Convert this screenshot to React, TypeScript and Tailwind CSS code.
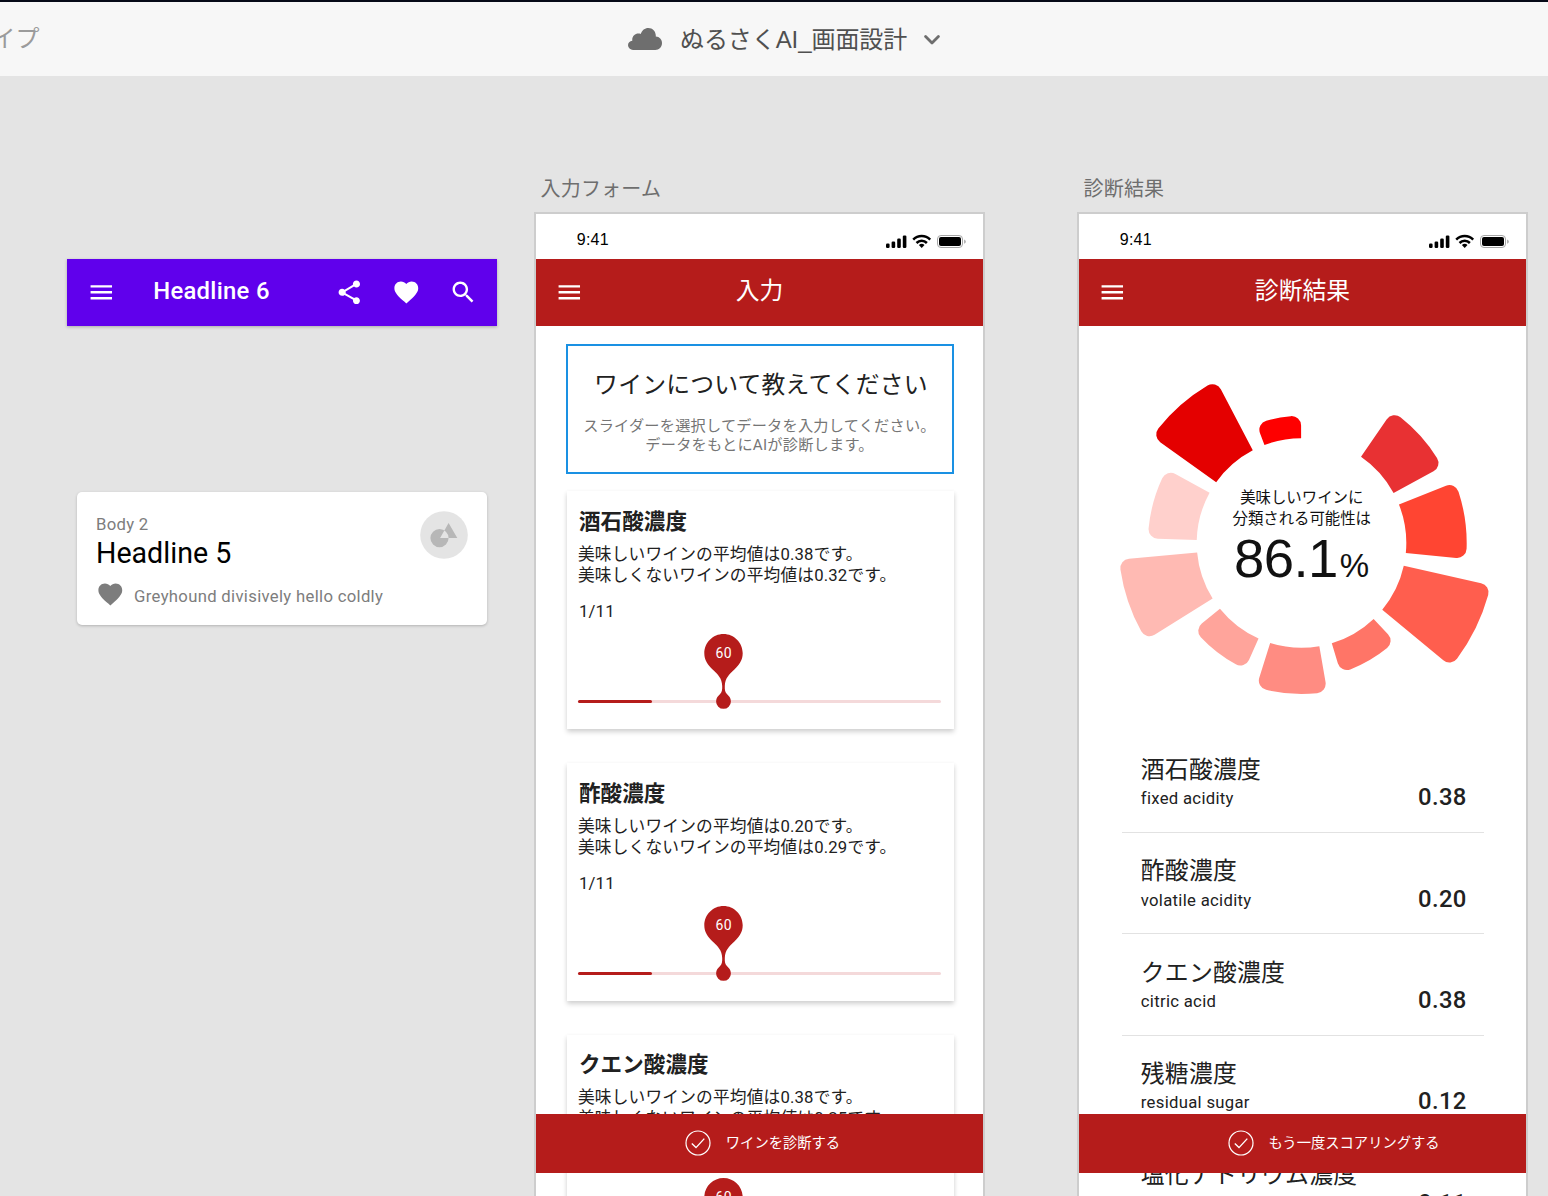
import type { ReactNode } from "react";

type Sector = { from: number; to: number; radius: number; color: string };

const sectors: Sector[] = [
  { from: -54.5, to: -27.7, radius: 183.3, color: "#e40000" },
  { from: -20.7, to: -0.2, radius: 127.3, color: "#fe0000" },
  { from: 34.6, to: 61.5, radius: 160, color: "#e83133" },
  { from: 68.4, to: 95.5, radius: 165.2, color: "#ff4532" },
  { from: 102.6, to: 129.6, radius: 193.8, color: "#ff5e4e" },
  { from: 136.5, to: 163.2, radius: 135.5, color: "#ff7567" },
  { from: 170.2, to: 197.4, radius: 151, color: "#ff8c82" },
  { from: 204.2, to: 231.1, radius: 138, color: "#ffa49b" },
  { from: 238, to: 264.8, radius: 183, color: "#ffbab3" },
  { from: 271.7, to: 298.7, radius: 153.6, color: "#ffd0cc" },
];

const INNER = 104.8;
const CORNER = 9.5;

// Ring sector whose two outer corners are rounded; angles run clockwise from 12 o'clock.
function sectorPath({ from, to, radius }: Sector) {
  const a = (from * Math.PI) / 180;
  const b = (to * Math.PI) / 180;
  const pt = (r: number, t: number) =>
    `${(r * Math.sin(t)).toFixed(2)} ${(-r * Math.cos(t)).toFixed(2)}`;
  const inset = Math.asin(CORNER / (radius - CORNER));
  const edge = Math.sqrt((radius - CORNER) ** 2 - CORNER ** 2);
  return [
    `M${pt(INNER, a)}`,
    `L${pt(edge, a)}`,
    `A${CORNER} ${CORNER} 0 0 1 ${pt(radius, a + inset)}`,
    `A${radius} ${radius} 0 0 1 ${pt(radius, b - inset)}`,
    `A${CORNER} ${CORNER} 0 0 1 ${pt(edge, b)}`,
    `L${pt(INNER, b)}`,
    `A${INNER} ${INNER} 0 0 0 ${pt(INNER, a)}Z`,
  ].join("");
}

function Icon({ d, className }: { d: string; className?: string }) {
  return (
    <svg viewBox="0 0 24 24" className={`size-[28.6px] shrink-0 fill-current ${className ?? ""}`}>
      <path d={d} />
    </svg>
  );
}

const MENU = "M3 18h18v-2H3v2zm0-5h18v-2H3v2zm0-7v2h18V6H3z";
const SHARE =
  "M18 16.08c-.76 0-1.44.3-1.96.77L8.91 12.7c.05-.23.09-.46.09-.7s-.04-.47-.09-.7l7.05-4.11c.54.5 1.25.81 2.04.81 1.66 0 3-1.34 3-3s-1.34-3-3-3-3 1.34-3 3c0 .24.04.47.09.7L8.04 9.81C7.5 9.31 6.79 9 6 9c-1.66 0-3 1.34-3 3s1.34 3 3 3c.79 0 1.5-.31 2.04-.81l7.12 4.16c-.05.21-.08.43-.08.65 0 1.61 1.31 2.92 2.92 2.92s2.92-1.31 2.92-2.92-1.31-2.92-2.92-2.92z";
const HEART =
  "M12 21.35l-1.45-1.32C5.4 15.36 2 12.28 2 8.5 2 5.42 4.42 3 7.5 3c1.74 0 3.41.81 4.5 2.09C13.09 3.81 14.76 3 16.5 3 19.58 3 22 5.42 22 8.5c0 3.78-3.4 6.86-8.55 11.54L12 21.35z";
const SEARCH =
  "M15.5 14h-.79l-.28-.27C15.41 12.59 16 11.11 16 9.5 16 5.91 13.09 3 9.5 3S3 5.91 3 9.5 5.91 16 9.5 16c1.61 0 3.09-.59 4.23-1.57l.27.28v.79l5 4.99L20.49 19l-4.99-5zm-6 0C7.01 14 5 11.99 5 9.5S7.01 5 9.5 5 14 7.01 14 9.5 11.99 14 9.5 14z";

function StatusBar() {
  return (
    <div className="flex h-[45.3px] items-start justify-between pt-[16px] pr-[17.5px] pl-[40.8px]">
      <span className="font-['Liberation_Sans',sans-serif] text-[16px] leading-[20px] tracking-[0.2px] text-black">
        9:41
      </span>
      <svg viewBox="0 0 82 16" className="mt-[4px] h-[16px] w-[82px]">
        <g>
          <rect x="2" y="9.5" width="3.6" height="4.5" rx="1.2" />
          <rect x="7.6" y="7.500" width="3.6" height="6.5" rx="1.2" />
          <rect x="13.2" y="4.500" width="3.6" height="9.5" rx="1.2" />
          <rect x="18.800" y="1.500" width="3.6" height="12.5" rx="1.2" />
        </g>
        <g fill="none" stroke="#000" strokeWidth="2.5">
          <path d="M29.2 5.6a12 12 0 0 1 17 0" />
          <path d="M32.5 9a7.3 7.3 0 0 1 10.4 0" />
        </g>
        <path d="M37.7 14l-2.8-2.9a4 4 0 0 1 5.6 0z" />
        <rect x="53.5" y="1.5" width="25" height="12" rx="3.5" fill="none" stroke="#a6a6a6" />
        <rect x="55" y="3" width="22" height="9" rx="2" />
        <path d="M80 5.5c1.4.6 1.9 1.2 1.9 2.1s-.5 1.6-1.9 2.2z" fill="#b3b3b3" />
      </svg>
    </div>
  );
}

function AppBar({ title }: { title: string }) {
  return (
    <div className="grid h-[66.7px] grid-cols-[66px_1fr_66px] bg-[#b51c1b] text-white">
      <div className="flex items-center pl-[19px]">
        <Icon d={MENU} />
      </div>
      <h2 className="pt-[16.7px] text-center text-[23.84px] leading-[30px]">{title}</h2>
    </div>
  );
}

function Artboard({
  name,
  title,
  action,
  actionInset,
  className,
  children,
}: {
  name: string;
  title: string;
  action: string;
  actionInset: string;
  className: string;
  children: ReactNode;
}) {
  return (
    <section className={`absolute top-[97px] w-[451px] ${className}`}>
      <h3 className="h-[39px] pt-px pl-[6.5px] font-['Liberation_Sans','Noto_Sans_CJK_JP',sans-serif] text-[20px] leading-[31px] tracking-[0.2px] text-[#6e6e6e]">
        {name}
      </h3>
      <div className="relative h-[1000px] overflow-hidden border-2 border-[#cdcdcd] bg-white">
        <StatusBar />
        <AppBar title={title} />
        {children}
        <div
          className={`absolute inset-x-0 top-[899.7px] flex h-[59.6px] items-center bg-[#b51c1b] text-white ${actionInset}`}
        >
          <svg
            viewBox="0 0 26 26"
            className="size-[26px] fill-none stroke-white"
            strokeWidth="1.2"
          >
            <circle cx="13" cy="13" r="12" />
            <path d="M6.8 13.6l4.2 4 8.3-9" strokeWidth="1.4" />
          </svg>
          <span className="ml-[14.5px] text-[14.3px] leading-[20px]">{action}</span>
        </div>
      </div>
    </section>
  );
}

function Slider() {
  return (
    <div className="relative mt-[12.25px] flex h-[75px] w-[363px] flex-col justify-end pb-[6.3px]">
      <div className="h-[2.6px] rounded-full bg-[#f4d9da]">
        <div className="h-full w-[74px] rounded-full bg-[#b51c1b]" />
      </div>
      <div className="absolute top-0 left-[126.3px] h-[75px] w-[39px]">
        <svg viewBox="0 0 39 75" className="h-full w-full fill-[#b51c1b]">
          <path d="M19.5 0C8.9 0 .3 8.6 .3 19.3c0 7.2 3.7 11.7 8.3 16.2C13.8 40.5 18 44 18.2 52c.1 3.9-.1 5.8-1.9 7.7-2.2 2.3-4.2 4.1-4.2 7.7a7.4 7.4 0 0 0 14.8 0c0-3.6-2-5.4-4.2-7.7-1.8-1.9-2-3.8-1.9-7.7.2-8 4.4-11.5 9.6-16.5 4.6-4.5 8.3-9 8.3-16.2C38.7 8.6 30.1 0 19.5 0z" />
        </svg>
        <span className="absolute inset-x-0 top-[9px] text-center text-[14px] leading-[20px] tracking-[0.4px] text-white">
          60
        </span>
      </div>
    </div>
  );
}

function InputCard({ title, good, bad }: { title: string; good: string; bad: string }) {
  return (
    <article className="mb-[33.85px] h-[238px] bg-white pt-[17.75px] pl-[11px] text-[16.69px] tracking-[0.18px] text-[#212121] shadow-[0_3px_5px_rgba(0,0,0,0.17),0_1px_5px_rgba(0,0,0,0.04)]">
      <h4 className="h-[26px] pl-px text-[21.5px] leading-[26px] font-bold tracking-[0.1px]">
        {title}
      </h4>
      <div className="mt-[9px] leading-[21px]">
        <p>美味しいワインの平均値は{good}です。</p>
        <p>美味しくないワインの平均値は{bad}です。</p>
      </div>
      <p className="mt-[16px] pl-px leading-[20px]">1/11</p>
      <Slider />
    </article>
  );
}

function ResultRow({ name, en, value }: { name: string; en: string; value: string }) {
  return (
    <li className="flex h-[101.4px] items-start justify-between border-b border-[#e2e2e2] pt-[23.5px] pr-[17.2px] pl-[18.8px] text-[#212121]">
      <div>
        <p className="text-[23.84px] leading-[30px] tracking-[0.22px]">{name}</p>
        <p className="mt-[4.3px] text-[16.69px] leading-[20px] tracking-[0.3px]">{en}</p>
      </div>
      <span className="mt-[27.4px] text-[23.84px] leading-[30px] font-medium tracking-[0.4px]">
        {value}
      </span>
    </li>
  );
}

export default function App() {
  return (
    <div className="flex h-[1196px] w-[1548px] flex-col overflow-hidden bg-[#e4e4e4] font-[Roboto,'Noto_Sans_CJK_JP',sans-serif]">
      <header className="grid h-[76px] shrink-0 grid-cols-[628px_1fr] items-center border-t-2 border-[#060a18] bg-[#f7f7f7] font-['Liberation_Sans','Noto_Sans_CJK_JP',sans-serif] text-[24px] leading-[32px]">
        <span className="-ml-[8.5px] text-[#9b9b9b]">イプ</span>
        <div className="flex items-center text-[#505050]">
          <svg viewBox="0 0 34 22" className="h-[22px] w-[34px] fill-[#6e6e6e]">
            <path d="M5 22a5 5 0 0 1-5-4.8c0-2.3 1.7-4.2 4.3-4.5C3.8 8.4 7 5.6 10.3 5.6c.9 0 1.7.1 2.4.4C14 2.3 16.8 0 20.3 0c4.5 0 7.8 3.5 7.5 8.5 3.6.1 6.2 3 6.2 6.6 0 4-2.9 6.9-6.7 6.9z" />
          </svg>
          <h1 className="mt-[2px] ml-[18px] tracking-[-0.08px]">ぬるさくAI_画面設計</h1>
          <svg
            viewBox="0 0 16 10"
            className="mt-px ml-[16.5px] h-[10px] w-[16px] fill-none stroke-[#6e6e6e]"
            strokeWidth="2.8"
            strokeLinecap="round"
            strokeLinejoin="round"
          >
            <path d="M1.6 1.6L8 8l6.4-6.4" />
          </svg>
        </div>
      </header>

      <main className="relative grow">
        <div className="absolute top-[183.3px] left-[67.3px] flex h-[66.7px] w-[429.5px] items-center bg-[#6000ec] pl-[19.4px] text-white shadow-[0_1px_3px_rgba(0,0,0,0.25)]">
          <Icon d={MENU} />
          <span className="-mt-[3px] ml-[37.9px] w-[181.7px] text-[23.84px] leading-[30px] font-medium tracking-[0.3px]">
            Headline 6
          </span>
          <Icon d={SHARE} />
          <Icon d={HEART} className="ml-[28.5px]" />
          <Icon d={SEARCH} className="ml-[28.5px]" />
        </div>

        <div className="absolute top-[415.7px] left-[77px] flex h-[133.5px] w-[410px] justify-between rounded-[5px] bg-white pt-[23px] pr-[19px] pl-[19px] shadow-[0_1px_3px_rgba(0,0,0,0.22)]">
          <div>
            <p className="text-[16.69px] leading-[20px] tracking-[0.3px] text-[#7d7d7d]">Body 2</p>
            <p className="mt-[1px] text-[28.6px] leading-[34px] text-black">Headline 5</p>
            <div className="mt-[10.3px] flex items-center text-[#7d7d7d]">
              <Icon d={HEART} />
              <span className="mt-[6px] ml-[9.5px] text-[16.69px] leading-[20px] tracking-[0.31px]">
                Greyhound divisively hello coldly
              </span>
            </div>
          </div>
          <svg viewBox="0 0 48 48" className="-mt-[4px] size-[48px]">
            <circle cx="24" cy="24" r="23.8" fill="#e4e4e4" />
            <path
              fill="#b7b7b7"
              fillRule="evenodd"
              d="M19.5 18a9.1 9.1 0 1 0 0 18.2 9.1 9.1 0 0 0 0-18.2zM28.6 12l8.7 15H20.1z"
            />
          </svg>
        </div>

        <Artboard
          name="入力フォーム"
          title="入力"
          action="ワインを診断する"
          actionInset="pl-[149.3px]"
          className="left-[534px]"
        >
          <div className="pt-[18px] pr-[29px] pl-[30px]">
            <div className="h-[130px] border-2 border-[#1a91e3] pt-[24px] text-center">
              <p className="pl-[2px] text-[23.84px] leading-[30px] tracking-[0.2px] text-[#212121]">
                ワインについて教えてください
              </p>
              <div className="mt-[16.7px] -ml-px text-[15.2px] leading-[19px] tracking-[0.22px] text-[#757575]">
                <p>スライダーを選択してデータを入力してください。</p>
                <p>データをもとにAIが診断します。</p>
              </div>
            </div>
            <div className="mt-[17px] ml-[1px]">
              <InputCard title="酒石酸濃度" good="0.38" bad="0.32" />
              <InputCard title="酢酸濃度" good="0.20" bad="0.29" />
              <InputCard title="クエン酸濃度" good="0.38" bad="0.25" />
            </div>
          </div>
        </Artboard>

        <Artboard
          name="診断結果"
          title="診断結果"
          action="もう一度スコアリングする"
          actionInset="pl-[149px]"
          className="left-[1077px]"
        >
          <div className="relative h-[405.4px]">
            <svg viewBox="-222.5 -217 447 405.4" className="h-full w-full">
              {sectors.map((s) => (
                <path key={s.color} d={sectorPath(s)} fill={s.color} />
              ))}
            </svg>
            <div className="absolute inset-x-0 top-[162.3px] -ml-[1.5px] text-center text-[15.4px] leading-[21px] text-[#111]">
              <p>美味しいワインに</p>
              <p>分類される可能性は</p>
              <p className="mt-[2px] -ml-px font-['Liberation_Sans',sans-serif] text-[54.5px] leading-[54px] tracking-[-0.6px] whitespace-nowrap">
                86.1<span className="ml-[2px] text-[33px]">%</span>
              </p>
            </div>
          </div>
          <ul className="mr-[42px] ml-[43px]">
            <ResultRow name="酒石酸濃度" en="fixed acidity" value="0.38" />
            <ResultRow name="酢酸濃度" en="volatile acidity" value="0.20" />
            <ResultRow name="クエン酸濃度" en="citric acid" value="0.38" />
            <ResultRow name="残糖濃度" en="residual sugar" value="0.12" />
            <ResultRow name="塩化ナトリウム濃度" en="chlorides" value="0.11" />
          </ul>
        </Artboard>
      </main>
    </div>
  );
}
